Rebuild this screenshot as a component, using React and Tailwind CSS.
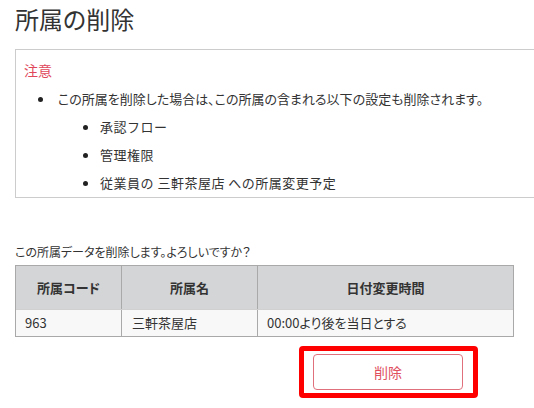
export default function App() {
  const font = { fontFamily: '"Noto Sans CJK JP", "Noto Sans", sans-serif', fontFeatureSettings: '"palt"' };
  const Dot = () => <span className="inline-block w-[5px] h-[5px] rounded-full bg-[#222]" />;
  return (
    <div className="w-[534px] h-[408px] overflow-hidden bg-white text-[#333]" style={font}>
      <div className="pl-[15px]">
        <h1 className="pt-[3px] text-[24px] leading-[32px] font-normal">所属の削除</h1>
        <div className="mt-[14px] w-[560px] h-[149px] border border-[#cccccc] pt-[10px]">
          <div className="pl-[8px] text-[14px] leading-[20px] text-[#e0475b]">注意</div>
          <div className="mt-[5px] flex items-center h-[28px] text-[13px]">
            <span className="w-[27px] flex justify-end"><Dot /></span>
            <span className="ml-[15px]">この所属を削除した場合は、この所属の含まれる以下の設定も削除されます。</span>
          </div>
          {["承認フロー", "管理権限", "従業員の 三軒茶屋店 への所属変更予定"].map((t) => (
            <div key={t} className="flex items-center h-[28px] text-[13px]">
              <span className="w-[72px] flex justify-end"><Dot /></span>
              <span className="ml-[12px] tracking-[0.5px] [font-feature-settings:normal]">{t}</span>
            </div>
          ))}
        </div>
        <div className="mt-[46px] text-[12px] leading-[16px]">この所属データを削除します。よろしいですか？</div>
        <div className="mt-[5px] w-[499px] border border-[#a9a9a9]">
          <div className="grid grid-cols-[106px_136px_1fr] bg-[#d4d5d6] h-[43px] text-[13px] font-bold">
            <div className="flex items-center justify-center border-r border-[#a9a9a9]">所属コード</div>
            <div className="flex items-center justify-center border-r border-[#a9a9a9]">所属名</div>
            <div className="flex items-center justify-center">日付変更時間</div>
          </div>
          <div className="grid grid-cols-[106px_136px_1fr] bg-[#f8f8f8] h-[27px] text-[13px] border-t border-[#d0d0d0]">
            <div className="flex items-center pl-[9px] border-r border-[#a9a9a9]">963</div>
            <div className="flex items-center pl-[10px] border-r border-[#a9a9a9]">三軒茶屋店</div>
            <div className="flex items-center pl-[9px]">00:00より後を当日とする</div>
          </div>
        </div>
        <div className="mt-[9px] ml-[284px] w-[179px] h-[52px] border-[5px] border-[#ff0000] rounded-[4px] pt-[3px] pl-[9px]">
          <button className="w-[150px] h-[36px] border border-[#e0707c] rounded-[4px] bg-white text-[14px] text-[#e0505f] flex items-center justify-center">
            削除
          </button>
        </div>
      </div>
    </div>
  );
}
